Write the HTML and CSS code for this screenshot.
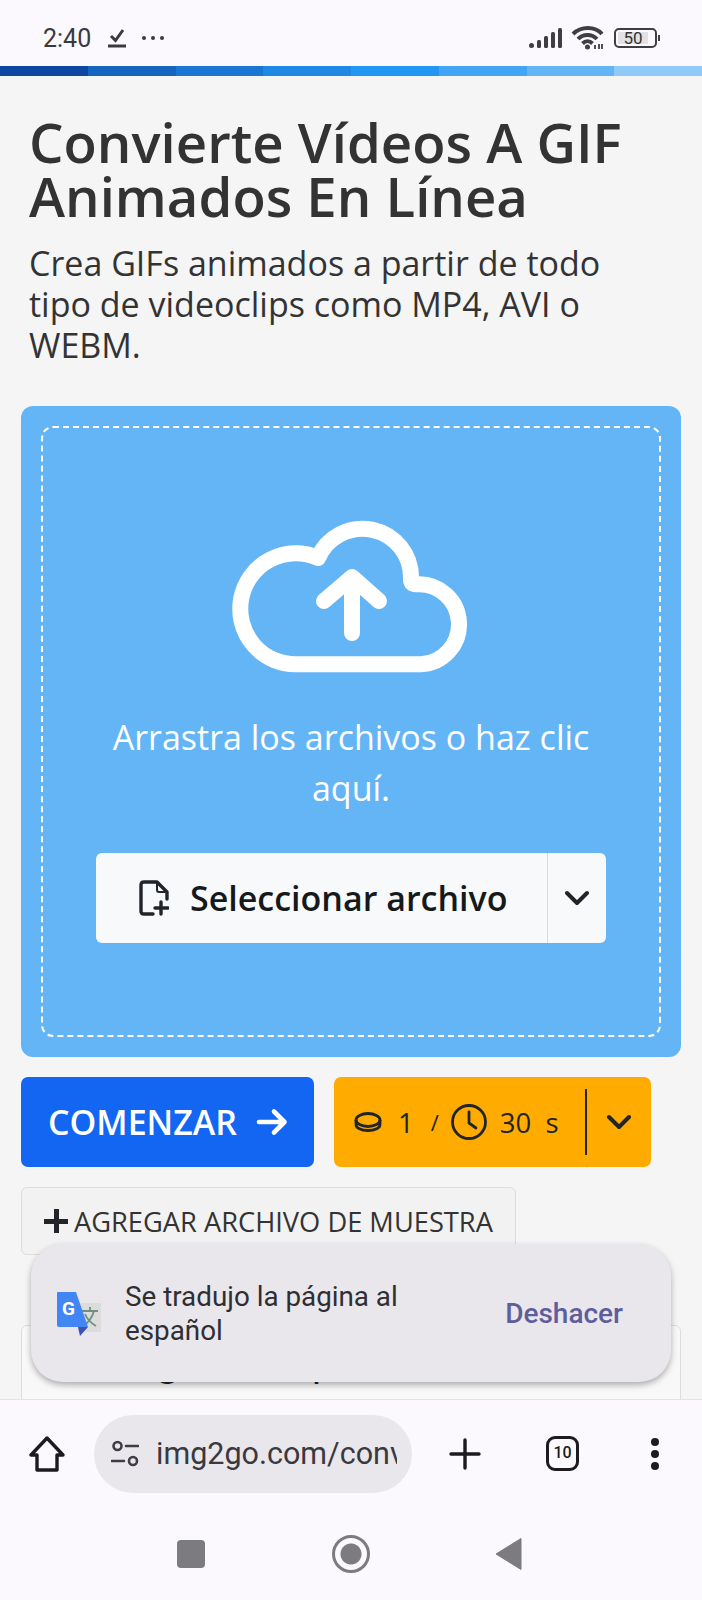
FILE: index.html
```html
<!DOCTYPE html>
<html lang="es">
<head>
  <meta charset="UTF-8">
  <meta name="viewport" content="width=device-width, initial-scale=1.0">
  <title>Convierte Vídeos A GIF</title>
  <link rel="stylesheet" href="styles.css">
</head>
<body>
  <div class="phone">
    <!-- Android status bar -->
    <header class="status-bar">
      <span class="time">2:40</span>
      <svg class="status-check" width="18" height="20" viewBox="0 0 18 20"><path d="M3 8l4.500 4.500L15 2" fill="none" stroke="#3a3a3e" stroke-width="3"/><rect x="0" y="16.500" width="18" height="3" fill="#3a3a3e"/></svg>
      <span class="status-more"><i></i><i></i><i></i></span>
      <span class="status-right">
        <svg width="33" height="20" viewBox="0 0 33 20" fill="#3f3f43"><circle cx="2.500" cy="17.500" r="2.500"/><rect x="8" y="12" width="4" height="8" rx="1.500"/><rect x="15" y="8" width="4" height="12" rx="1.500"/><rect x="22" y="4" width="4" height="16" rx="1.500"/><rect x="29" y="0" width="4" height="20" rx="1.500"/></svg>
        <svg class="wifi" width="34" height="24" viewBox="0 0 34 24" fill="none" stroke="#3f3f43" stroke-width="4"><path d="M2 8C10 0 24 0 31 8"/><path d="M7 13C12 7.500 21 7.500 26 13"/><path d="M11.500 17.500C14.500 14.500 18.500 14.500 21.500 17.500"/><circle cx="16.500" cy="21" r="2.500" fill="#3f3f43" stroke="none"/><path d="M24 19v4M28 18v5M31 18v5" stroke-width="1.800"/></svg>
        <span class="battery"><span class="battery-level">50</span></span>
        <i class="battery-tip"></i>
      </span>
    </header>

    <div class="stripes"><i></i><i></i><i></i><i></i><i></i><i></i><i></i><i></i></div>

    <main class="page">
      <h1>Convierte Vídeos A GIF Animados En Línea</h1>
      <p class="lead">Crea GIFs animados a partir de todo tipo de videoclips como MP4, AVI o WEBM.</p>

      <section class="upload">
        <div class="dropzone">
          <svg class="cloud" width="300" height="200" viewBox="0 0 300 200" fill="none" stroke="#fff" stroke-width="16" stroke-linecap="round" stroke-linejoin="round">
            <path d="M97 174.300A55.500 55.500 0 1 1 117 68A48.500 48.500 0 0 1 210 88Q209.500 95 216 94.300A40 40 0 0 1 220 174.300Z"/>
            <path d="M151 143V88M123 111L151 87L178 111"/>
          </svg>
          <p class="drop-text">Arrastra los archivos o haz clic aquí.</p>
          <div class="select-btn">
            <span class="select-main">
              <svg width="30" height="36" viewBox="0 0 30 36" fill="none" stroke="#212529" stroke-width="3.400" stroke-linejoin="round" stroke-linecap="round"><path d="M14 34H5Q2 34 2 31V5Q2 2 5 2H18L28 12V19"/><path d="M18 2V10Q18 12 20 12H28" stroke-width="2"/><path d="M22 22V34M16 28H29"/></svg>
              Seleccionar archivo
            </span>
            <span class="select-arrow">
              <svg width="24" height="16" viewBox="0 0 24 16" fill="none" stroke="#212529" stroke-width="4" stroke-linecap="round" stroke-linejoin="round"><path d="M2 3l10 10L22 3"/></svg>
            </span>
          </div>
        </div>
      </section>

      <div class="actions">
        <button class="btn-start">COMENZAR
          <svg width="32" height="28" viewBox="0 0 32 28" fill="none" stroke="#fff" stroke-width="4.600" stroke-linecap="round" stroke-linejoin="round"><path d="M3 14H28M18 3.500L28.500 14L18 24.500"/></svg>
        </button>
        <div class="btn-credits">
          <svg width="30" height="20" viewBox="0 0 30 20" fill="none" stroke="#212529" stroke-width="2.800"><ellipse cx="15" cy="8" rx="12" ry="6.500"/><path d="M3 8v4.500C3 16 8 18.500 15 18.500S27 16 27 12.500V8"/></svg>
          <span class="credit-num">1</span>
          <span class="credit-sep">/</span>
          <svg width="36" height="36" viewBox="0 0 36 36" fill="none" stroke="#212529" stroke-width="2.800" stroke-linecap="round"><circle cx="18" cy="18" r="16.500"/><path d="M18 8V19L25 24"/></svg>
          <span class="credit-time">30&nbsp;&nbsp;s</span>
          <i class="credit-line"></i>
          <svg class="credit-arrow" width="24" height="16" viewBox="0 0 24 16" fill="none" stroke="#212529" stroke-width="4" stroke-linecap="round" stroke-linejoin="round"><path d="M2 3l10 10L22 3"/></svg>
        </div>
      </div>

      <button class="btn-sample"><span class="plus"></span>AGREGAR ARCHIVO DE MUESTRA</button>

      <section class="options">Configuración opcional</section>

      <!-- translate snackbar -->
      <div class="toast">
        <svg class="toast-icon" width="46" height="46" viewBox="0 0 46 46">
          <rect x="22" y="13" width="23" height="29" fill="#dcdcdc"/>
          <path d="M26 21H42M34 17v4M38 21c-2 7-6 12-11 15M29 24c2 5 6 9 11 12" fill="none" stroke="#6f8f83" stroke-width="1.800"/>
          <path d="M2 2H20L32 37H3Q1 37 1 35V3Q1 2 2 2Z" fill="#4285f4"/>
          <path d="M22 37H32L24 46Z" fill="#3d52b8"/>
          <text x="6" y="25" class="toast-g">G</text>
        </svg>
        <span class="toast-text">Se tradujo la página al español</span>
        <span class="toast-action">Deshacer</span>
      </div>
    </main>

    <!-- browser toolbar -->
    <footer class="toolbar">
      <svg class="home" width="36" height="36" viewBox="0 0 36 36" fill="none" stroke="#1d1b20" stroke-width="3.400" stroke-linejoin="round"><path d="M18 2L2 19H8V34H28V19H34Z"/></svg>
      <div class="url">
        <svg width="28" height="28" viewBox="0 0 28 28" fill="none" stroke="#3f3e44" stroke-width="2.600" stroke-linecap="round"><circle cx="6.500" cy="6" r="4"/><path d="M15 6H27M1 21H13"/><circle cx="22" cy="21" r="4"/></svg>
        <span class="url-text">img2go.com/conv</span>
      </div>
      <svg class="tool-plus" width="32" height="32" viewBox="0 0 32 32" stroke="#1d1b20" stroke-width="3.400" stroke-linecap="round"><path d="M16 2V30M2 16H30"/></svg>
      <span class="tabs">10</span>
      <span class="menu"><i></i><i></i><i></i></span>
    </footer>

    <nav class="nav-bar">
      <i class="nav-square"></i>
      <i class="nav-circle"></i>
      <svg class="nav-back" width="28" height="32" viewBox="0 0 28 32"><path d="M26 0.500V31.500L1 16Z" fill="#7b7b80" stroke="#7b7b80" stroke-linejoin="round"/></svg>
    </nav>
  </div>
</body>
</html>
```

FILE: styles.css
```css
* {
  margin: 0;
  padding: 0;
  box-sizing: border-box;
}

body {
  font-family: 'Open Sans', sans-serif;
  background: #f5f5f5;
  color: #333;
}

.phone {
  display: flex;
  flex-direction: column;
  height: 1600px;
  overflow: hidden;
}

/* Status bar */
.status-bar {
  display: flex;
  align-items: center;
  height: 66px;
  padding: 10px 42px 0 43px;
  background: #fbf9fe;
  flex-shrink: 0;
}

.time {
  font-family: Roboto, sans-serif;
  font-size: 25px;
  color: #3a3a3e;
  margin-right: 17px;
}

.status-more {
  display: flex;
  gap: 5px;
  margin-left: 16px;
}

.status-more i {
  width: 4px;
  height: 4px;
  border-radius: 50%;
  background: #3a3a3e;
}

.status-right {
  display: flex;
  align-items: center;
  margin-left: auto;
}

.wifi {
  margin-left: 9px;
}

.battery {
  width: 43px;
  height: 20px;
  margin-left: 9px;
  padding: 2px;
  border: 2px solid #3f3f43;
  border-radius: 5px;
}

.battery-level {
  display: block;
  width: 30px;
  height: 12px;
  background: #e2e2e4;
  font-family: Roboto, sans-serif;
  font-size: 17px;
  line-height: 12px;
  text-align: center;
  color: #333;
}

.battery-tip {
  width: 2px;
  height: 6px;
  margin-left: 1px;
  background: #3f3f43;
}

/* Coloured strip under the status bar */
.stripes {
  display: grid;
  grid-template-columns: repeat(8, 1fr);
  height: 10px;
  flex-shrink: 0;
}

.stripes i:nth-child(1) { background: #0d47a1; }
.stripes i:nth-child(2) { background: #1565c0; }
.stripes i:nth-child(3) { background: #1976d2; }
.stripes i:nth-child(4) { background: #1e88e5; }
.stripes i:nth-child(5) { background: #2196f3; }
.stripes i:nth-child(6) { background: #42a5f5; }
.stripes i:nth-child(7) { background: #64b5f6; }
.stripes i:nth-child(8) { background: #90caf9; }

/* Page */
.page {
  position: relative;
  flex: 1;
  min-height: 0;
  overflow: hidden;
  padding: 39px 21px 0;
}

h1 {
  font-size: 54.500px;
  font-weight: 600;
  line-height: 54px;
  padding-left: 8px;
  margin-bottom: 20px;
  color: #333;
}

.lead {
  font-size: 34px;
  line-height: 41px;
  padding: 0 60px 0 8px;
  color: #333;
}

.upload {
  margin-top: 40px;
  height: 651px;
  padding: 20px;
  background: #64b5f6;
  border-radius: 12px;
}

.dropzone {
  display: flex;
  flex-direction: column;
  align-items: center;
  height: 100%;
  padding-top: 62px;
  border: 2px dashed #fff;
  border-radius: 12px;
}

.cloud {
  display: block;
  flex-shrink: 0;
}

.drop-text {
  margin-top: 22px;
  padding: 0 50px;
  font-size: 34px;
  line-height: 51px;
  text-align: center;
  color: #fff;
}

.select-btn {
  display: flex;
  width: 510px;
  height: 90px;
  margin-top: 39px;
  background: #f8f9fa;
  border-radius: 6px;
}

.select-main {
  display: flex;
  flex: 1;
  align-items: center;
  padding-left: 43px;
  gap: 21px;
  font-size: 34px;
  font-weight: 600;
  color: #16191c;
  border-right: 1px solid #d8dadc;
}

.select-arrow {
  display: flex;
  align-items: center;
  justify-content: center;
  width: 58px;
}

/* Action buttons */
.actions {
  display: flex;
  gap: 20px;
  margin-top: 20px;
}

.btn-start {
  display: flex;
  align-items: center;
  gap: 19px;
  width: 293px;
  height: 90px;
  padding-left: 27px;
  border: none;
  border-radius: 7px;
  background: #1266f1;
  font-family: inherit;
  font-size: 34px;
  font-weight: 600;
  color: #fff;
}

.btn-credits {
  display: flex;
  align-items: center;
  width: 317px;
  height: 90px;
  padding-left: 19px;
  border-radius: 7px;
  background: #ffab00;
  font-size: 27.500px;
  color: #212529;
}

.credit-num {
  margin-left: 15px;
}

.credit-sep {
  margin: 0 12px 0 17px;
  font-size: 22px;
}

.credit-time {
  margin-left: 13px;
}

.credit-line {
  width: 2px;
  height: 66px;
  margin-left: 26px;
  background: #212529;
}

.credit-arrow {
  margin-left: 20px;
}

.btn-sample {
  display: flex;
  align-items: center;
  width: 495px;
  height: 68px;
  margin-top: 20px;
  padding-left: 22px;
  border: 1px solid #dcdcdc;
  border-radius: 6px;
  background: #f2f2f2;
  font-family: inherit;
  font-size: 27.250px;
  color: #333;
}

.plus {
  flex-shrink: 0;
  width: 24px;
  height: 24px;
  margin-right: 6px;
  background: linear-gradient(#212529, #212529) center / 100% 5px no-repeat,
    linear-gradient(#212529, #212529) center / 5px 100% no-repeat;
}

.options {
  height: 200px;
  margin-top: 70px;
  padding: 19px 0 0 62px;
  border: 1px solid #dcdcdc;
  border-radius: 6px;
  background: #f8f8f8;
  font-size: 30px;
  font-weight: 600;
  color: #222;
}

/* Snackbar */
.toast {
  position: absolute;
  left: 31px;
  top: 1168px;
  display: flex;
  align-items: center;
  width: 640px;
  height: 138px;
  padding: 0 48px 0 25px;
  border-radius: 32px;
  background: #e9e7ec;
  box-shadow: 0 3px 6px rgba(0, 0, 0, 0.3);
  font-family: Roboto, sans-serif;
}

.toast-icon {
  flex-shrink: 0;
  margin-right: 23px;
}

.toast-g {
  font-family: Roboto, sans-serif;
  font-size: 19px;
  font-weight: 700;
  fill: #fff;
}

.toast-text {
  width: 300px;
  padding-top: 2px;
  font-size: 27.800px;
  line-height: 34px;
  color: #2f2e33;
}

.toast-action {
  margin-left: auto;
  font-size: 28px;
  font-weight: 500;
  color: #5f5e9c;
}

/* Browser toolbar */
.toolbar {
  display: flex;
  align-items: center;
  height: 109px;
  padding: 0 0 1px 29px;
  border-top: 1px solid #e3e2e6;
  background: #fbf9fe;
  flex-shrink: 0;
}

.url {
  display: flex;
  align-items: center;
  width: 318px;
  height: 78px;
  margin-left: 29px;
  padding: 0 15px 0 17px;
  gap: 17px;
  border-radius: 39px;
  background: #e9e7ec;
  overflow: hidden;
}

.url svg {
  flex-shrink: 0;
}

.url-text {
  overflow: hidden;
  white-space: nowrap;
  font-family: Roboto, sans-serif;
  font-size: 30.500px;
  color: #3a393f;
}

.tool-plus {
  margin-left: 37px;
}

.tabs {
  width: 33px;
  height: 35px;
  margin-left: 65px;
  border: 3.500px solid #1d1b20;
  border-radius: 9px;
  font-family: Roboto, sans-serif;
  font-size: 16px;
  font-weight: 500;
  line-height: 28px;
  text-align: center;
  color: #1d1b20;
}

.menu {
  display: flex;
  flex-direction: column;
  gap: 4px;
  margin-left: 72px;
}

.menu i {
  width: 8px;
  height: 8px;
  border-radius: 50%;
  background: #1d1b20;
}

/* Android navigation */
.nav-bar {
  display: flex;
  align-items: center;
  justify-content: center;
  gap: 127px;
  height: 92px;
  padding-right: 2px;
  background: #fbf9fe;
  flex-shrink: 0;
}

.nav-back {
  margin-left: -2px;
}

.nav-square {
  width: 28px;
  height: 28px;
  border-radius: 4px;
  background: #7b7b80;
}

.nav-circle {
  width: 38px;
  height: 38px;
  border-radius: 50%;
  border: 3px solid #7b7b80;
  background: radial-gradient(circle, #7b7b80 10px, #fbf9fe 11px);
}
```
